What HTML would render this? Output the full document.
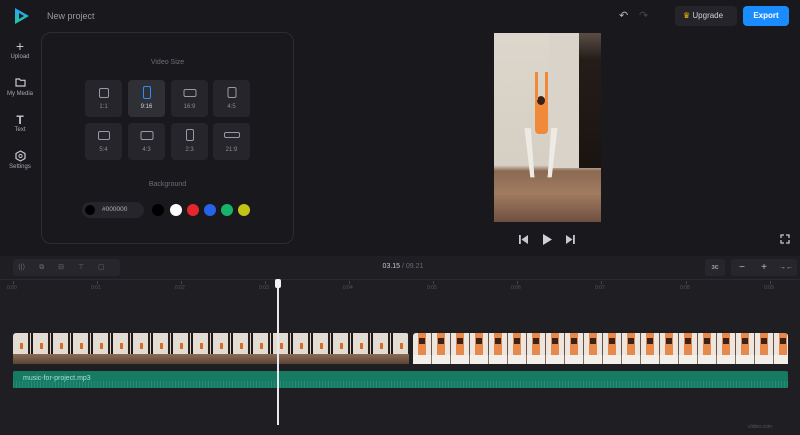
<!DOCTYPE html>
<html><head><style>
*{margin:0;padding:0;box-sizing:border-box}
body{width:800px;height:435px;background:#18181d;font-family:"Liberation Sans",sans-serif;position:relative;overflow:hidden;color:#9a9aa2}
.a{position:absolute}
.side{font-size:6px;color:#a8a8b0;text-align:center;width:40px;left:0}
.tile{position:absolute;width:37px;height:37px;background:#25252b;border-radius:4px;font-size:6px;color:#8a8a92;text-align:center}
.tile i{position:absolute;border:1.3px solid #9a9aa2;border-radius:2px;left:50%;transform:translateX(-50%)}
.tile span{position:absolute;bottom:7px;left:0;right:0}
.dot{position:absolute;width:12px;height:12px;border-radius:50%;top:204px}
.tb{position:absolute;top:259px;height:17px;background:#26262c;border-radius:3px;color:#9a9aa2;font-size:9px;text-align:center;line-height:17px}
.rl{position:absolute;top:285px;font-size:5px;color:#55555c}
.tk{position:absolute;top:281px;width:1px;height:3px;background:#44444a}
</style></head><body>
<svg class="a" style="left:13px;top:7px" width="17" height="18" viewBox="0 0 17 18"><defs><linearGradient id="g" x1="0" y1="0" x2="0" y2="1"><stop offset="0" stop-color="#2f9bff"/><stop offset="1" stop-color="#1ccf9a"/></linearGradient></defs><path d="M2 1 L16 9 L2 17 Z" fill="url(#g)"/><path d="M6 6 L11 9 L6 12 Z" fill="#18181d"/></svg>
<div class="a" style="left:47px;top:11px;font-size:9px;color:#9a9aa2">New project</div>
<div class="a side" style="top:40px;font-size:14px;color:#c8c8d0;line-height:12px">+</div>
<div class="a side" style="top:54px">Upload</div>
<svg class="a" style="left:15px;top:77px" width="11" height="10"><path d="M1 2h3.5l1 1.3H10V9H1Z" fill="none" stroke="#c8c8d0" stroke-width="1.2"/></svg>
<div class="a side" style="top:91px">My Media</div>
<div class="a side" style="top:113px;font-size:12px;color:#c8c8d0;font-weight:bold">T</div>
<div class="a side" style="top:127px">Text</div>
<svg class="a" style="left:15px;top:150px" width="11" height="12"><path d="M5.5 1 L10 3.5 V8.5 L5.5 11 L1 8.5 V3.5 Z" fill="none" stroke="#c8c8d0" stroke-width="1.2"/><circle cx="5.5" cy="6" r="1.6" fill="none" stroke="#c8c8d0"/></svg>
<div class="a side" style="top:164px">Settings</div>
<div class="a" style="left:41px;top:32px;width:253px;height:212px;border:1px solid #2c2c32;border-radius:10px"></div>
<div class="a" style="left:41px;top:59px;width:253px;text-align:center;font-size:7px;color:#6e6e76">Video Size</div>
<div class="tile" style="left:85px;top:80px"><i style="top:8px;width:10px;height:10px"></i><span>1:1</span></div>
<div class="tile" style="left:128px;top:80px;background:#2f2f36"><i style="top:6px;width:8px;height:13px;border-color:#2d8cff"></i><span style="color:#cfcfd6">9:16</span></div>
<div class="tile" style="left:171px;top:80px"><i style="top:9px;width:13px;height:8px"></i><span>16:9</span></div>
<div class="tile" style="left:213px;top:80px"><i style="top:7px;width:9px;height:11px"></i><span>4:5</span></div>
<div class="tile" style="left:85px;top:123px"><i style="top:8px;width:12px;height:9px"></i><span>5:4</span></div>
<div class="tile" style="left:128px;top:123px"><i style="top:8px;width:13px;height:9px"></i><span>4:3</span></div>
<div class="tile" style="left:171px;top:123px"><i style="top:6px;width:8px;height:12px"></i><span>2:3</span></div>
<div class="tile" style="left:213px;top:123px"><i style="top:9px;width:16px;height:6px"></i><span>21:9</span></div>
<div class="a" style="left:41px;top:181px;width:253px;text-align:center;font-size:7px;color:#6e6e76">Background</div>
<div class="a" style="left:82px;top:202px;width:62px;height:16px;background:#25252b;border-radius:8px"></div>
<div class="a" style="left:85px;top:205px;width:10px;height:10px;border-radius:50%;background:#000"></div>
<div class="a" style="left:102px;top:206px;font-size:6.5px;color:#b0b0b8">#000000</div>
<div class="dot" style="left:152px;background:#000"></div>
<div class="dot" style="left:170px;background:#fff"></div>
<div class="dot" style="left:187px;background:#e5262b"></div>
<div class="dot" style="left:204px;background:#2563eb"></div>
<div class="dot" style="left:221px;background:#16b36a"></div>
<div class="dot" style="left:238px;background:#c3c317"></div>
<div class="a" style="left:619px;top:9px;font-size:11px;color:#b8b8c0">↶</div>
<div class="a" style="left:639px;top:9px;font-size:11px;color:#45454c">↷</div>
<div class="a" style="left:675px;top:6px;width:62px;height:20px;background:#24242a;border-radius:4px;font-size:8px;color:#d0d0d8;line-height:20px;padding-left:8px"><span style="color:#f5b900">♛</span> Upgrade</div>
<div class="a" style="left:743px;top:6px;width:46px;height:20px;background:#1a8cff;border-radius:4px;font-size:8px;color:#fff;line-height:20px;text-align:center;font-weight:bold">Export</div>
<div class="a" style="left:494px;top:33px;width:107px;height:189px;background:linear-gradient(180deg,#dcd6cc 0%,#d6cfc3 70%,#8b6a52 73%,#a07b60 85%,#6e5040 100%)"></div>
<div class="a" style="left:579px;top:33px;width:22px;height:135px;background:linear-gradient(180deg,#5a4d45,#241c18 20%,#1a1410)"></div>
<div class="a" style="left:549px;top:33px;width:30px;height:135px;background:#d9d3ca"></div>
<div class="a" style="left:535px;top:98px;width:13px;height:36px;background:#f08a3a;border-radius:4px"></div>
<div class="a" style="left:537px;top:96px;width:8px;height:9px;background:#3a2218;border-radius:50%"></div>
<div class="a" style="left:528px;top:133px;width:26px;height:50px;border-left:5px solid #eeeae4;border-right:5px solid #eeeae4;transform:perspective(40px) rotateX(-20deg)"></div>
<div class="a" style="left:535px;top:72px;width:3px;height:28px;background:#f08a3a"></div>
<div class="a" style="left:545px;top:72px;width:3px;height:28px;background:#f08a3a"></div>
<svg class="a" style="left:519px;top:234px" width="60" height="11"><rect x="0" y="1" width="1.8" height="9" fill="#c8c8d0"/><path d="M9 1 L2.5 5.5 L9 10Z" fill="#c8c8d0"/><path d="M24 0 L33 5.5 L24 11Z" fill="#d0d0d8"/><path d="M47 1 L53.5 5.5 L47 10Z" fill="#c8c8d0"/><rect x="54" y="1" width="1.8" height="9" fill="#c8c8d0"/></svg>
<svg class="a" style="left:780px;top:234px" width="10" height="10"><path d="M1 4V1h3M6 1h3v3M9 6v3H6M4 9H1V6" fill="none" stroke="#c8c8d0" stroke-width="1.3"/></svg>
<div class="a" style="left:0;top:256px;width:800px;height:179px;background:#1e1e23"></div>
<div class="a" style="left:0;top:279px;width:800px;height:1px;background:#2a2a30"></div>
<div class="tb" style="left:13px;width:107px"></div>
<div class="a" style="left:13px;top:259px;width:107px;font-size:7px;color:#6a6a72;line-height:17px;word-spacing:12px;padding-left:5px">⟨|⟩ ⧉ ⊟ ⊤ ▢</div>
<div class="a" style="left:360px;top:263px;width:86px;text-align:center;font-size:7px;color:#c8c8d0">03.15 <span style="color:#6a6a72">/ 09.21</span></div>
<div class="tb" style="left:705px;width:20px;font-size:7px;font-weight:bold">ɜc</div>
<div class="tb" style="left:731px;width:66px"></div>
<div class="a" style="left:731px;top:259px;width:22px;text-align:center;font-size:10px;line-height:17px;color:#b8b8c0">−</div>
<div class="a" style="left:753px;top:259px;width:22px;text-align:center;font-size:10px;line-height:17px;color:#b8b8c0">+</div>
<div class="a" style="left:775px;top:259px;width:22px;text-align:center;font-size:7px;line-height:17px;color:#b8b8c0">→←</div>
<div class="tk" style="left:13px"></div><div class="rl" style="left:7px">0:00</div>
<div class="tk" style="left:97px"></div><div class="rl" style="left:91px">0:01</div>
<div class="tk" style="left:181px"></div><div class="rl" style="left:175px">0:02</div>
<div class="tk" style="left:265px"></div><div class="rl" style="left:259px">0:03</div>
<div class="tk" style="left:349px"></div><div class="rl" style="left:343px">0:04</div>
<div class="tk" style="left:433px"></div><div class="rl" style="left:427px">0:05</div>
<div class="tk" style="left:517px"></div><div class="rl" style="left:511px">0:06</div>
<div class="tk" style="left:601px"></div><div class="rl" style="left:595px">0:07</div>
<div class="tk" style="left:686px"></div><div class="rl" style="left:680px">0:08</div>
<div class="tk" style="left:770px"></div><div class="rl" style="left:764px">0:09</div>
<div class="a" style="left:13px;top:333px;width:396px;height:31px;border-radius:3px;background:repeating-linear-gradient(90deg,#e2dcd2 0 15px,#2a211c 15px 17px,#d8d0c4 17px 18px,#1e1a18 18px 20px);"></div>
<div class="a" style="left:13px;top:354px;width:396px;height:10px;background:linear-gradient(180deg,#8a6a55,#5c4535)"></div>
<div class="a" style="left:13px;top:343px;width:396px;height:6px;background:repeating-linear-gradient(90deg,transparent 0 7px,#d86a2e 7px 10px,transparent 10px 20px)"></div>
<div class="a" style="left:413px;top:333px;width:375px;height:31px;border-radius:3px;background:repeating-linear-gradient(90deg,#ece6de 0 5px,#e8884a 5px 13px,#ece6de 13px 18px,#6a5048 18px 19px)"></div>
<div class="a" style="left:413px;top:338px;width:375px;height:6px;background:repeating-linear-gradient(90deg,transparent 0 6px,#3a2218 6px 12px,transparent 12px 19px)"></div>
<div class="a" style="left:413px;top:355px;width:375px;height:9px;background:repeating-linear-gradient(90deg,#f2efea 0 18px,#8a7060 18px 19px)"></div>
<div class="a" style="left:13px;top:371px;width:775px;height:17px;background:#177a62;border-radius:2px"></div>
<div class="a" style="left:13px;top:381px;width:775px;height:7px;background:repeating-linear-gradient(90deg,#2a9a7e 0 1px,transparent 1px 3px);opacity:.6"></div>
<div class="a" style="left:23px;top:375px;font-size:7px;color:#a8e0d0">music-for-project.mp3</div>
<div class="a" style="left:277px;top:283px;width:2px;height:142px;background:#e8e8ee"></div>
<div class="a" style="left:275px;top:279px;width:6px;height:9px;background:#f0f0f5;border-radius:2px"></div>
<div class="a" style="left:748px;top:424px;font-size:5px;color:#55555c">clideo.com</div>
</body></html>
